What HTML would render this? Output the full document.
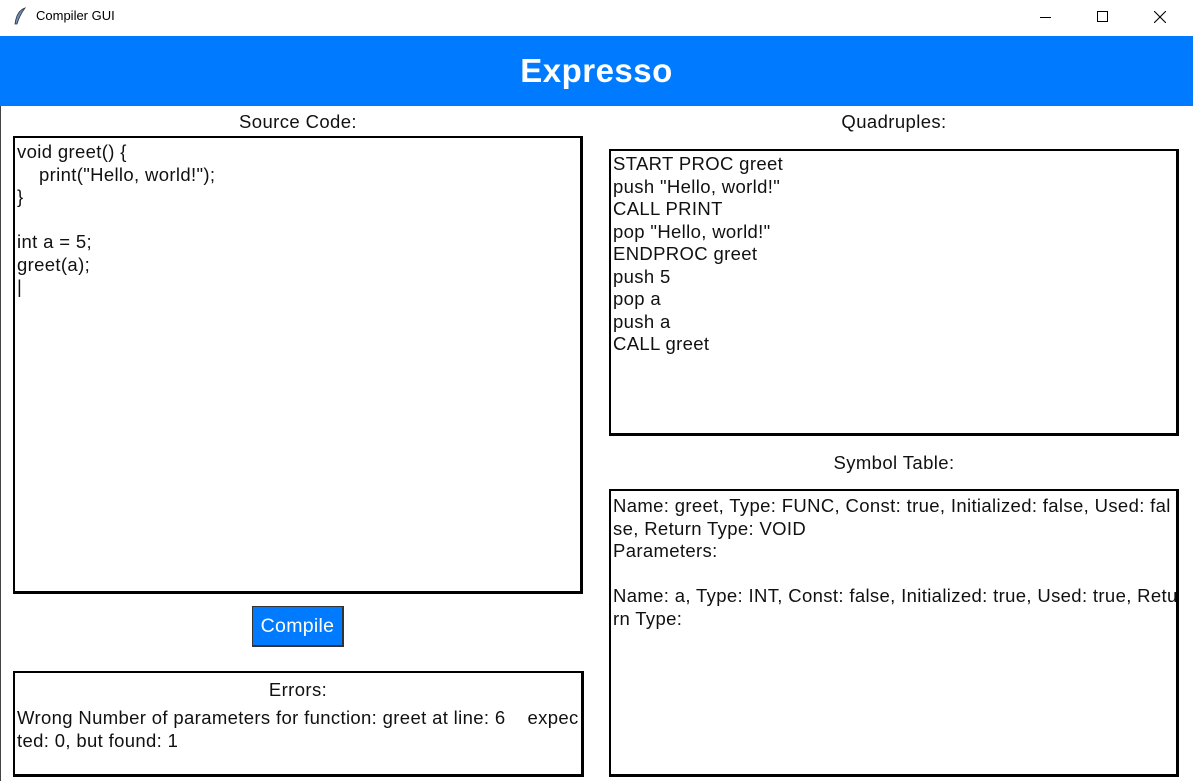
<!DOCTYPE html>
<html><head><style>
*{margin:0;padding:0;box-sizing:border-box}
body{width:1193px;height:781px;background:#fff;position:relative;overflow:hidden;font-family:"Liberation Sans",Arial,sans-serif;color:#111}
.abs{position:absolute}
.box{position:absolute;border:2px solid #000;border-right-width:3px;border-bottom-width:3px;background:#fff}
.txt{font-size:18.5px;line-height:22.5px;white-space:pre;letter-spacing:0.35px}
.lbl{position:absolute;font-size:18.5px;text-align:center;letter-spacing:0.4px}
</style></head><body>
<div class="abs" style="left:0;top:0;width:1193px;height:36px;background:#fff"></div>
<svg class="abs" style="left:13px;top:7px" width="14" height="20" viewBox="0 0 14 20"><path d="M12 1 C6 3 3 9 2 17 L4 17 C6 10 9 5 12 1Z" fill="#6a8fc0" stroke="#333" stroke-width="0.8"/></svg>
<div class="abs" style="left:36px;top:8px;font-size:13px;color:#000">Compiler GUI</div>
<div class="abs" style="left:1040px;top:17px;width:11px;height:1px;background:#000"></div>
<div class="abs" style="left:1097px;top:11px;width:11px;height:11px;border:1px solid #000"></div>
<svg class="abs" style="left:1154px;top:11px" width="12" height="12"><path d="M0 0L12 12M12 0L0 12" stroke="#000" stroke-width="1.1"/></svg>
<div class="abs" style="left:0;top:36px;width:1193px;height:70px;background:#007bff;color:#fff;font-weight:bold;font-size:33px;text-align:center;line-height:70px;letter-spacing:0.5px">Expresso</div>
<div class="abs" style="left:0;top:106px;width:1px;height:675px;background:#444"></div>

<div class="lbl" style="left:13px;width:570px;top:111px">Source Code:</div>
<div class="box" style="left:13px;top:136px;width:570px;height:458px"><div class="txt" style="padding:3px 0 0 2px">void greet() {
    print("Hello, world!");
}

int a = 5;
greet(a);
|</div></div>

<div class="abs" style="left:252px;top:606px;width:92px;height:41px;background:#007bff;border:1px solid #333;border-right-width:2px;border-bottom-width:2px;color:#fff;font-size:19.5px;text-align:center;line-height:38px;letter-spacing:0.3px">Compile</div>

<div class="box" style="left:13px;top:671px;width:571px;height:106px">
<div class="lbl" style="left:0;width:566px;top:6px">Errors:</div>
<div class="txt" style="position:absolute;left:2px;top:34px">Wrong Number of parameters for function: greet at line: 6    expec
ted: 0, but found: 1</div></div>

<div class="lbl" style="left:609px;width:570px;top:111px">Quadruples:</div>
<div class="box" style="left:609px;top:149px;width:570px;height:287px"><div class="txt" style="padding:2px 0 0 2px">START PROC greet
push "Hello, world!"
CALL PRINT
pop "Hello, world!"
ENDPROC greet
push 5
pop a
push a
CALL greet</div></div>

<div class="lbl" style="left:609px;width:570px;top:452px">Symbol Table:</div>
<div class="box" style="left:609px;top:489px;width:570px;height:288px"><div class="txt" style="padding:4px 0 0 2px">Name: greet, Type: FUNC, Const: true, Initialized: false, Used: fal
se, Return Type: VOID
Parameters:

Name: a, Type: INT, Const: false, Initialized: true, Used: true, Retu
rn Type:</div></div>
</body></html>
